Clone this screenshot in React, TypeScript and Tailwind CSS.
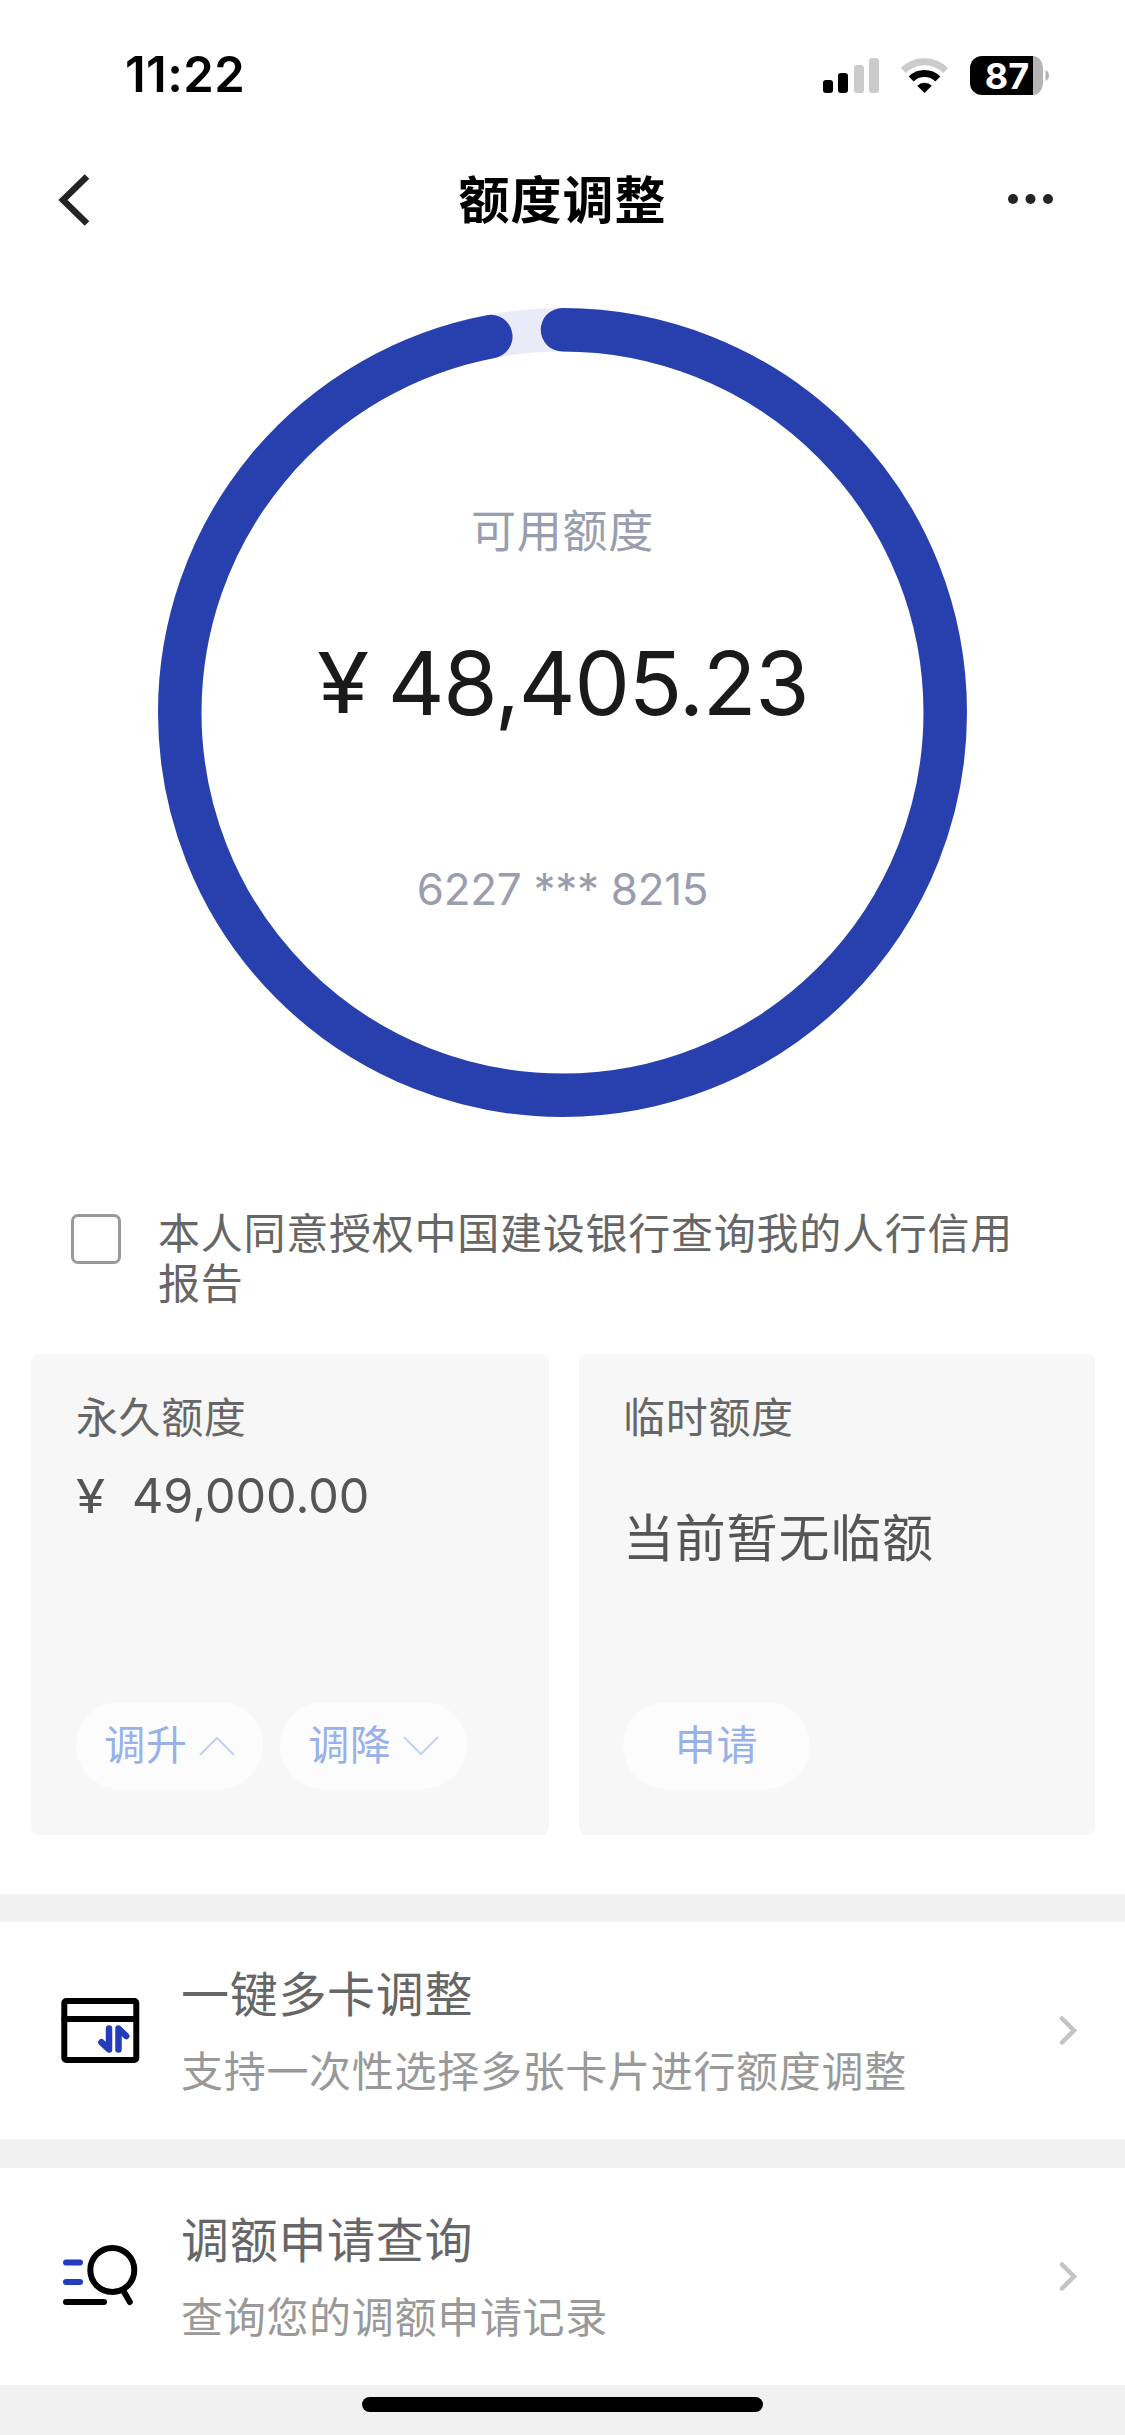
import { useState } from 'react';

const RING_SIZE = 809;
const RING_STROKE = 43.5;
const RING_RADIUS = (RING_SIZE - RING_STROKE) / 2;
const RING_PERCENT = 0.9696;

const menus = [
    { id: 'multi', title: '一键多卡调整', desc: '支持一次性选择多张卡片进行额度调整' },
    { id: 'query', title: '调额申请查询', desc: '查询您的调额申请记录' },
];

const StatusBar = () => (
    <div className="h-[149px] pl-[125px] pr-[76px] flex items-center justify-between text-black">
        <span className="text-[49px] font-semibold leading-none tracking-[0.4px]">11:22</span>
        <svg width="228" height="60" viewBox="0 -10 228 60">
            <rect x="2" y="25" width="10" height="13" rx="3" fill="#000" />
            <rect x="17" y="18" width="10" height="20" rx="3" fill="#000" />
            <rect x="33" y="10" width="10" height="28" rx="3" fill="#cbcbcb" />
            <rect x="48" y="3" width="10" height="35" rx="3" fill="#cbcbcb" />
            <g fill="none" strokeWidth="7">
                <path d="M82.3 15.5 A30 30 0 0 1 124.7 15.5" stroke="#cbcbcb" />
                <path d="M90.2 24 A19 19 0 0 1 116.8 24" stroke="#000" />
            </g>
            <path d="M103.5 38 L96.2 30.8 A10.5 10.5 0 0 1 110.8 30.8 Z" fill="#000" />
            <path d="M161 1 H212 V40 H161 A12 12 0 0 1 149 28 V13 A12 12 0 0 1 161 1 Z" fill="#000" />
            <path d="M212 1 A10 12 0 0 1 222 13 V28 A10 12 0 0 1 212 40 Z" fill="#b4b4b4" />
            <path d="M224.5 15 Q228 16.5 228 20.5 Q228 24.5 224.5 26 Z" fill="#b4b4b4" />
            <text x="186" y="33.5" textAnchor="middle" fontSize="36" fontWeight="700" fill="#fff">87</text>
        </svg>
    </div>
);

const LimitRing = () => {
    const length = 2 * Math.PI * RING_RADIUS;
    return (
        <svg className="col-start-1 row-start-1" width={RING_SIZE} height={RING_SIZE} viewBox={`0 0 ${RING_SIZE} ${RING_SIZE}`}>
            <g fill="none" strokeWidth={RING_STROKE} transform={`rotate(-90 ${RING_SIZE / 2} ${RING_SIZE / 2})`}>
                <circle cx={RING_SIZE / 2} cy={RING_SIZE / 2} r={RING_RADIUS} stroke="#e9ebf9" />
                <circle
                    cx={RING_SIZE / 2}
                    cy={RING_SIZE / 2}
                    r={RING_RADIUS}
                    stroke="#2840ae"
                    strokeLinecap="round"
                    strokeDasharray={`${length * RING_PERCENT} ${length}`}
                />
            </g>
        </svg>
    );
};

const CardIcon = () => (
    <svg width="80" height="80" viewBox="0 0 80 80" fill="none" strokeWidth="6" strokeLinecap="round" strokeLinejoin="round">
        <rect x="4.3" y="10" width="72" height="59" rx="2" stroke="#000" />
        <path d="M4.3 28 H76" stroke="#000" />
        <path d="M49 37.5 V58.5 L41.5 51.3" stroke="#233bbd" strokeWidth="6.5" />
        <path d="M58.5 58.5 V37.5 L66.2 45" stroke="#233bbd" strokeWidth="6.5" />
    </svg>
);

const QueryIcon = () => (
    <svg width="80" height="80" viewBox="0 0 80 80" fill="none" strokeWidth="6" strokeLinecap="round">
        <path d="M6 25.5 H20 M6 45 H20" stroke="#233bbd" />
        <path d="M6 65 H44" stroke="#000" />
        <circle cx="52.3" cy="33" r="22" stroke="#000" />
        <path d="M63.5 54 L69.8 65" stroke="#000" />
    </svg>
);

const App = () => {
    const [agreed, setAgreed] = useState(false);

    return (
        <div className="w-[1125px] h-[2435px] overflow-hidden bg-white flex flex-col font-['Inter','Noto_Sans_CJK_SC',sans-serif]">
            <StatusBar />

            <div className="h-[102px] pl-[58px] pr-[70px] flex items-center justify-between">
                <svg width="60" height="52" viewBox="0 0 60 52" fill="none" stroke="#222427" strokeWidth="6.5">
                    <path d="M29 2.5 L5 26 L29 49.5" />
                </svg>
                <h1 className="text-[51px] leading-none font-bold tracking-[1px] text-black">额度调整</h1>
                <svg width="48" height="12" viewBox="0 0 48 12" fill="#222427">
                    <circle cx="6" cy="5" r="5" />
                    <circle cx="23.5" cy="5" r="5" />
                    <circle cx="41" cy="5" r="5" />
                </svg>
            </div>

            <div className="mt-[57px] grid justify-center">
                <LimitRing />
                <div className="col-start-1 row-start-1 flex flex-col items-center pt-[194px]">
                    <p className="text-[45px] leading-[60px] tracking-[0.7px] text-[#9a9dae]">可用额度</p>
                    <p className="mt-[71px] pl-[3px] text-[88px] leading-[100px] text-[#1a1a1a] flex items-center">
                        <span className="text-[84px] mr-[22px] inline-block scale-x-[1.13]">¥</span>
                        <span className="tracking-[-1.2px]">48,405.23</span>
                    </p>
                    <p className="mt-[126px] text-[44px] leading-[60px] tracking-[-0.3px] text-[#9a9dae]">6227 *** 8215</p>
                </div>
            </div>

            <div className="mt-[92px] pl-[71px] pr-[90px] flex items-start">
                <button
                    onClick={() => setAgreed(!agreed)}
                    className={`mt-[5px] size-[50px] shrink-0 rounded-[7px] border-[3px] border-[#999] ${agreed ? 'bg-[#2840ae]' : 'bg-white'}`}
                />
                <p className="ml-[37px] text-[42px] leading-[50px] tracking-[0.75px] text-[#666]">
                    本人同意授权中国建设银行查询我的人行信用报告
                </p>
            </div>

            <div className="mt-[45px] h-[481px] pl-[31px] pr-[30px] flex gap-[30px]">
                <div className="flex-1 rounded-lg bg-[#f7f7f7] px-[45px] pt-[39px] pb-[46px] flex flex-col">
                    <p className="text-[42px] leading-[50px] tracking-[0.6px] text-[#666]">永久额度</p>
                    <p className="mt-[23px] text-[48.5px] leading-[60px] text-[#555] flex">
                        <span className="w-[56px] text-[46px]">
                            <span className="inline-block origin-left scale-x-[1.15]">¥</span>
                        </span>
                        <span>49,000.00</span>
                    </p>
                    <div className="mt-auto flex gap-[17px]">
                        <button className="w-[187px] h-[87px] rounded-full bg-[#fcfcfc] flex items-center justify-center gap-[11px] text-[41px] leading-none tracking-[0.7px] text-[#98b1e9]">
                            调升
                            <svg width="36" height="20" viewBox="0 0 36 20" fill="none" stroke="#c3d1f3" strokeWidth="2">
                                <path d="M1 19 L18 2 L35 19" />
                            </svg>
                        </button>
                        <button className="w-[187px] h-[87px] rounded-full bg-[#fcfcfc] flex items-center justify-center gap-[11px] text-[41px] leading-none tracking-[0.7px] text-[#98b1e9]">
                            调降
                            <svg width="36" height="20" viewBox="0 0 36 20" fill="none" stroke="#c3d1f3" strokeWidth="2">
                                <path d="M1 1 L18 18 L35 1" />
                            </svg>
                        </button>
                    </div>
                </div>
                <div className="flex-1 rounded-lg bg-[#f7f7f7] px-[44px] pt-[39px] pb-[46px] flex flex-col">
                    <p className="text-[42px] leading-[50px] tracking-[0.7px] text-[#666]">临时额度</p>
                    <p className="mt-[66px] text-[51px] leading-[60px] tracking-[0.8px] text-[#555]">当前暂无临额</p>
                    <button className="mt-auto w-[187px] h-[87px] rounded-full bg-[#fcfcfc] text-[41px] leading-none tracking-[0.7px] text-[#98b1e9]">
                        申请
                    </button>
                </div>
            </div>

            <div className="mt-[59px] flex-1 bg-[#f1f1f1] pt-7 flex flex-col">
                <div className="flex flex-col gap-[29px]">
                    {menus.map((menu) => (
                        <div key={menu.id} className="h-[217px] bg-white pl-[60px] pr-[48px] flex items-center">
                            {menu.id === 'multi' ? <CardIcon /> : <QueryIcon />}
                            <div className="ml-[41px] pt-[6px] flex-1">
                                <p className="text-[48px] leading-[60px] tracking-[0.7px] text-[#666]">{menu.title}</p>
                                <p className="mt-[17px] text-[42px] leading-[60px] tracking-[0.7px] text-[#999]">{menu.desc}</p>
                            </div>
                            <svg width="18" height="30" viewBox="0 0 18 30" fill="none" stroke="#c4c4c4" strokeWidth="4.5" strokeLinecap="round">
                                <path d="M3 2.5 L15 14.5 L3 26.5" />
                            </svg>
                        </div>
                    ))}
                </div>
                <div className="mt-[12px] w-[401px] h-[15px] rounded-full bg-black self-center" />
            </div>
        </div>
    );
};

export default App;
